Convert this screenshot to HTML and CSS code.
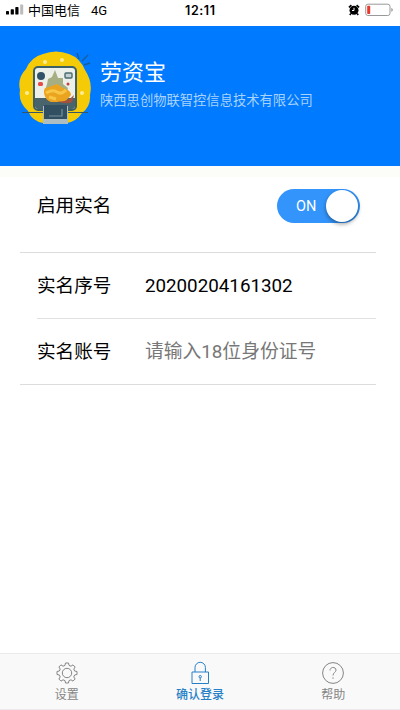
FILE: index.html
```html
<!DOCTYPE html>
<html lang="zh-CN">
<head>
<meta charset="utf-8">
<title>劳资宝</title>
<link rel="stylesheet" href="styles.css">
</head>
<body>
<div class="status">
  <svg class="signal" width="18" height="12" viewBox="0 0 18 12">
    <rect x="0" y="7" width="3" height="3.6" rx=".7"/><rect x="4.7" y="5.2" width="3.2" height="5.4" rx=".7"/><rect x="9.3" y="3" width="3.2" height="7.6" rx=".7"/><rect x="14.2" y=".4" width="3" height="10.2" rx=".7" fill="#bbb"/>
  </svg>
  <span class="carrier">中国电信</span><span class="network">4G</span>
  <span class="time">12:11</span>
  <svg class="alarm" width="12" height="12" viewBox="0 0 12 12">
    <circle cx="6" cy="6.3" r="4.5"/><path d="M.9 3.4 3.4 1.1M11.1 3.4 8.6 1.1M2.8 9.5l-1 1.5M9.2 9.5l1 1.5" stroke="#000" stroke-width="1.5"/><path d="M6 3.8v2.7H4" fill="none" stroke="#fff"/>
  </svg>
  <svg class="battery" width="29" height="14" viewBox="0 0 29 14">
    <rect x=".7" y="1.2" width="24.3" height="11.3" rx="2.2" fill="#fff" stroke="#999"/><rect x="2.2" y="2.8" width="3" height="8.1" rx=".7" fill="#e8392f"/><path d="M26.3 5c2 .5 2 3.200 0 3.700z" fill="#999"/>
  </svg>
</div>
<header class="header">
  <svg class="logo" width="76" height="76" viewBox="0 0 76 76">
    <path d="M26 4Q39-1 52 4Q63 8 68 20Q76 32 73 45Q74 56 65 63Q60 71 50 73H26Q15 71 11 61Q1 52 3 40Q0 28 9 19Q14 7 26 4Z" fill="#f5cb08"/>
    <g fill="#ffed96"><circle cx="28" cy="12" r="2"/><circle cx="45" cy="10" r="2"/><circle cx="10" cy="43" r="2"/><circle cx="65" cy="43" r="2"/></g>
    <path d="M62 9l-2-6M65 11l6-6M67 15l6-2" stroke="#175f96" stroke-width="1.400"/>
    <rect x="17" y="17" width="42" height="43" rx="4" fill="#edf0e9" stroke="#3f6064" stroke-width="2"/>
    <path d="M18 48h40v8q0 3-3 3H21q-3 0-3-3z" fill="#49646c"/>
    <circle cx="24" cy="26" r="4" fill="#315269"/><rect x="21" y="32" width="5" height="4" rx="1.500" fill="#e64b45"/>
    <rect x="48" y="23" width="7" height="5" rx="1" fill="#c5d1d0" stroke="#486970" stroke-width="1.400"/>
    <path d="M30 34l1-5 4-2 3-7 3 8 5 0 0 6 5 4-3 10H33l-5-7z" fill="#a6af83"/>
    <path d="M27 43q-1-6 5-6l8-3 6 4q8 2 8 7l-6 7H34q-6-2-7-9z" fill="#eba420"/>
    <path d="M29 43q7-4 11-1t9-2M32 47l7 2" fill="none" stroke="#f8c646" stroke-width="3"/>
    <path d="M40 51q10 2 17-6l-2 7q-6 3-15-1z" fill="#a3503c"/><circle cx="51" cy="34" r="1.500" fill="#c2413e"/>
    <path d="M5 62.500h66" stroke="#355767"/>
    <path d="M26 56h25v18H26z" fill="#adbdc1"/><path d="M27 55h23v14H27z" fill="#314f61"/><path d="M32 66h13v-7" stroke="#78909a" stroke-width="1.200" fill="none"/>
  </svg>
  <div class="heading">
    <h1 class="title">劳资宝</h1>
    <p class="company">陕西思创物联智控信息技术有限公司</p>
  </div>
</header>
<main class="main">
  <section class="row toggle-row">
    <span class="label">启用实名</span>
    <div class="switch"><span>ON</span><i class="knob"></i></div>
  </section>
  <section class="form">
    <div class="row field first"><span class="label">实名序号</span><span class="value">20200204161302</span></div>
    <div class="row field"><span class="label">实名账号</span><span class="value placeholder">请输入18位身份证号</span></div>
  </section>
</main>
<nav class="tabs">
  <div class="tab">
    <svg width="24" height="24" viewBox="-12 -12 24 24"><path d="M-1.500-10h3L2-7.600 3.960-6.790 6.010-8.130 8.130-6.010 6.790-3.960 7.600-2 10-1.500v3L7.600 2 6.790 3.960 8.130 6.010 6.010 8.130 3.960 6.790 2 7.600 1.500 10h-3L-2 7.600-3.960 6.790-6.010 8.130-8.130 6.010-6.790 3.960-7.600 2-10 1.500v-3L-7.600-2-6.790-3.960-8.130-6.010-6.010-8.130-3.960-6.790-2-7.600Z"/><circle r="4.700"/></svg>
    <span>设置</span>
  </div>
  <div class="tab active">
    <svg width="24" height="24" viewBox="0 0 24 24"><path d="M4 11h16.500v11.500H4zM7 11V6.500a5.200 5.200 0 0 1 10.400 0V11M12.200 17v3"/><circle cx="12.200" cy="15.700" r="1.200"/></svg>
    <span>确认登录</span>
  </div>
  <div class="tab">
    <svg width="24" height="24" viewBox="0 0 24 24"><circle cx="12" cy="12" r="10.400"/><path d="M9 9.500c0-4 6-4 6-.4 0 2.200-3 2.500-3 5.400M12 16.300v1.500"/></svg>
    <span>帮助</span>
  </div>
</nav>
</body>
</html>
```
FILE: styles.css
```css
* { box-sizing: border-box; }
body {
  margin: 0;
  width: 400px;
  height: 710px;
  display: flex;
  flex-direction: column;
  overflow: hidden;
  background: #fff;
  color: #000;
  font-family: Roboto, "Noto Sans CJK SC", sans-serif;
}
.status {
  height: 26px;
  flex: none;
  display: grid;
  grid-template-columns: 22px 63px 94px 163px 17px 29px;
  align-items: center;
  padding: 0 0 5px 6px;
  font-size: 13px;
  line-height: 20px;
}
.signal { margin-top: -1px; }
.network { font-size: 13px; }
.time {
  font-family: Inter, sans-serif;
  font-size: 12.5px;
  font-weight: 600;
  letter-spacing: .6px;
}
.alarm, .battery { margin-top: -1px; }
.header {
  height: 140px;
  flex: none;
  display: flex;
  padding: 24px 0 0 17px;
  background: #007aff;
  color: #fff;
}
.logo { flex: none; }
.heading { margin-left: 7px; }
.title { margin: 8px 0 0; font-size: 22px; line-height: 30px; font-weight: 400; }
.company { margin: 3px 0 0; font-size: 13.3px; line-height: 20px; color: #a9d3ff; white-space: nowrap; }
.main {
  flex: 1;
  border-top: 11px solid #fcfcf9;
  padding: 0 24px 0 20px;
}
.row { display: flex; align-items: center; }
.toggle-row {
  height: 76px;
  padding: 0 16px 18px 17px;
  justify-content: space-between;
  border-bottom: 1px solid #dcdcdc;
}
.label { font-size: 18.6px; line-height: 28px; }
.switch {
  width: 83px;
  height: 34px;
  border-radius: 17px;
  background: #3395fb;
  color: #fff;
  display: flex;
  align-items: center;
  justify-content: space-between;
  padding: 0 2px 0 19px;
  font-size: 14.5px;
  margin-top: 1px;
}
.knob {
  width: 32px;
  height: 32px;
  border-radius: 50%;
  background: #fff;
  box-shadow: 0 2px 4px #0006;
}
.form { border-bottom: 1px solid #dcdcdc; }
.field { height: 65px; margin-left: 17px; }
.first { height: 66px; border-bottom: 1px solid #e1e1e1; }
.value { margin-left: 33.5px; font-size: 18.8px; line-height: 28px; }
.placeholder { color: #777; }
.tabs {
  height: 57px;
  flex: none;
  display: grid;
  grid-template-columns: repeat(3, 1fr);
  background: #f9f9f9;
  border-top: 1px solid #eaeaea;
  border-bottom: 1px solid #eaeaea;
}
.tab {
  display: flex;
  flex-direction: column;
  align-items: center;
  padding-top: 7px;
  color: #858585;
  font-size: 12px;
  line-height: 17px;
}
.tab span { margin-top: 2px; }
.tab svg {
  fill: none;
  stroke: currentColor;
  stroke-width: 1;
  stroke-linejoin: round;
}
.active { color: #2680c8; font-weight: 500; }
```
